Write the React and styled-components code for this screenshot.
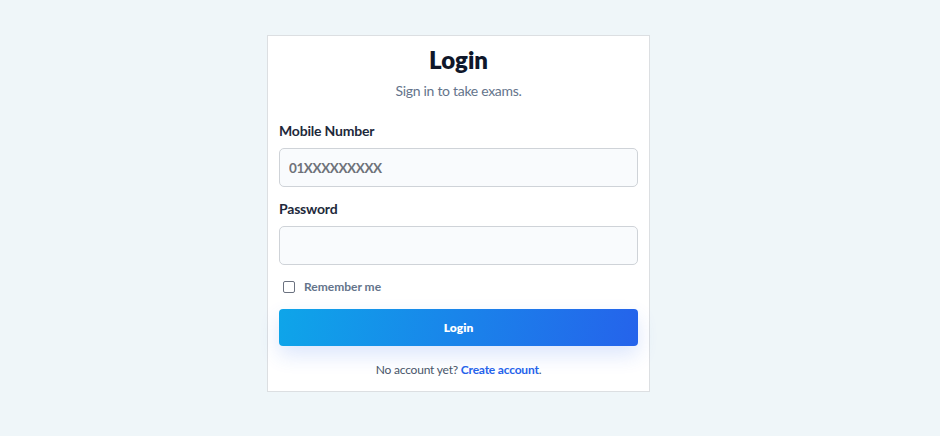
import React from "react";
import styled, { createGlobalStyle } from "styled-components";

const Global = createGlobalStyle`
  html, body { margin: 0; padding: 0; }
  body {
    background: #eff6f9;
    font-family: Lato, "Noto Sans", sans-serif;
    width: 940px;
    height: 436px;
    overflow: hidden;
  }
  * { box-sizing: border-box; }
`;

const Page = styled.div`
  display: flex;
  justify-content: center;
  padding: 35px 23px 0 0;
`;

const Card = styled.form`
  width: 383px;
  background: #ffffff;
  border: 1px solid #dcdfe2;
  padding: 9px 11px 13px;
  display: flex;
  flex-direction: column;
`;

const Title = styled.h1`
  margin: 0;
  text-align: center;
  font-size: 24px;
  line-height: 30px;
  font-weight: 800;
  color: #0f172a;
`;

const Subtitle = styled.p`
  margin: 6px 0 0;
  text-align: center;
  font-size: 14px;
  line-height: 20px;
  letter-spacing: -0.3px;
  color: #64748b;
`;

const Field = styled.div`
  display: flex;
  flex-direction: column;
  margin-top: ${(p) => p.$top}px;
`;

const Label = styled.label`
  font-size: 14px;
  line-height: 20px;
  font-weight: 700;
  letter-spacing: -0.2px;
  color: #1e293b;
  margin-bottom: 7px;
`;

const Input = styled.input`
  height: 39px;
  width: 100%;
  border: 1px solid #cfd3d8;
  border-radius: 5px;
  background: #f9fbfd;
  padding: 0 9px;
  font-family: inherit;
  font-size: 13.5px;
  font-weight: 700;
  letter-spacing: -0.4px;
  color: #1e293b;
  outline: none;
  &::placeholder { color: #6e7279; }
`;

const CheckRow = styled.label`
  display: flex;
  align-items: center;
  gap: 9px;
  margin-top: 14px;
  padding-left: 4px;
  font-size: 12px;
  font-weight: 700;
  color: #64748b;
`;

const Box = styled.span`
  width: 12px;
  height: 12px;
  border: 1px solid #6b7280;
  border-radius: 2px;
  background: #fff;
`;

const Button = styled.button`
  margin-top: 15px;
  height: 37px;
  width: 100%;
  border: none;
  border-radius: 4px;
  background: linear-gradient(100deg, #0ea5e9 0%, #2563eb 100%);
  box-shadow: 0 9px 20px rgba(37, 99, 235, 0.16);
  color: #fff;
  font-family: inherit;
  font-size: 12px;
  font-weight: 800;
`;

const Footer = styled.p`
  margin: 16px 0 0;
  text-align: center;
  font-size: 12px;
  line-height: 16px;
  letter-spacing: -0.2px;
  color: #475569;
`;

const Link = styled.a`
  color: #2563eb;
  font-weight: 700;
  text-decoration: none;
`;

export default function App() {
  return (
    <>
      <Global />
      <Page>
        <Card onSubmit={(e) => e.preventDefault()}>
          <Title>Login</Title>
          <Subtitle>Sign in to take exams.</Subtitle>
          <Field $top={20}>
            <Label>Mobile Number</Label>
            <Input placeholder="01XXXXXXXXX" />
          </Field>
          <Field $top={12}>
            <Label>Password</Label>
            <Input type="password" />
          </Field>
          <CheckRow>
            <Box />
            Remember me
          </CheckRow>
          <Button type="submit">Login</Button>
          <Footer>
            No account yet? <Link href="#">Create account</Link>.
          </Footer>
        </Card>
      </Page>
    </>
  );
}
